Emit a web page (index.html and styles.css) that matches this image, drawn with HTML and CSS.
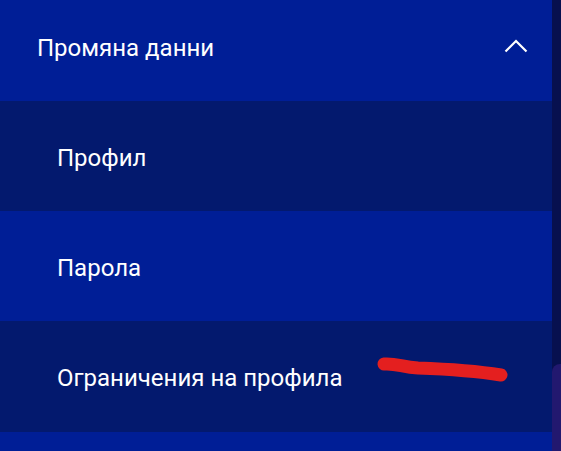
FILE: index.html
```html
<!DOCTYPE html>
<html lang="bg">
<head>
<meta charset="utf-8">
<link rel="stylesheet" href="styles.css">
</head>
<body>
<div class="page">
  <nav class="menu">
    <div class="menu-header">
      <span class="menu-title">Промяна данни</span>
      <svg class="chevron" width="24" height="14" viewBox="0 0 24 14">
        <path d="M1.5 12.5 L12 2 L22.5 12.5" fill="none" stroke="#fff" stroke-width="2.2"/>
      </svg>
    </div>
    <a class="menu-item dark">Профил</a>
    <a class="menu-item">Парола</a>
    <a class="menu-item dark">Ограничения на профила
      <svg class="scribble" width="144" height="30" viewBox="0 0 144 30">
        <path d="M9 9 C21 8 27 12 43 13 C71 14 95 15 126 20" fill="none" stroke="#e41f1f" stroke-width="13" stroke-linecap="round"/>
      </svg>
    </a>
    <div class="menu-item tail"></div>
  </nav>
  <aside class="side">
    <div class="side-top"></div>
    <div class="side-bottom"></div>
  </aside>
</div>
</body>
</html>
```
FILE: styles.css
```css
html, body {
  margin: 0;
  padding: 0;
  height: 100%;
}
body {
  background: #07104f;
  font-family: Roboto, "Noto Sans", sans-serif;
  color: #fff;
  overflow: hidden;
}
.page {
  display: flex;
  height: 451px;
}
.menu {
  width: 552px;
  display: flex;
  flex-direction: column;
  background: #001e96;
}
.menu-header {
  height: 101px;
  box-sizing: border-box;
  display: flex;
  align-items: center;
  justify-content: space-between;
  padding: 0 24px 6px 37px;
  background: #001e96;
}
.menu-title {
  font-size: 24px;
}
.chevron {
  display: block;
  margin-top: -4px;
}
.menu-item {
  position: relative;
  height: 110px;
  flex: none;
  box-sizing: border-box;
  display: flex;
  align-items: center;
  padding: 3px 0 0 57px;
  font-size: 24px;
  background: #001e96;
}
.menu-item.dark {
  background: #03196e;
}
.menu-item:nth-child(4) {
  height: 111px;
}
.menu-item.tail {
  flex: 1;
  height: auto;
}
.scribble {
  position: absolute;
  left: 375px;
  top: 34px;
}
.side {
  flex: 1;
  display: flex;
  flex-direction: column;
}
.side-top {
  height: 364px;
  background: #07104f;
}
.side-bottom {
  flex: 1;
  background: #22186f;
  border-top-left-radius: 8px;
}
```
